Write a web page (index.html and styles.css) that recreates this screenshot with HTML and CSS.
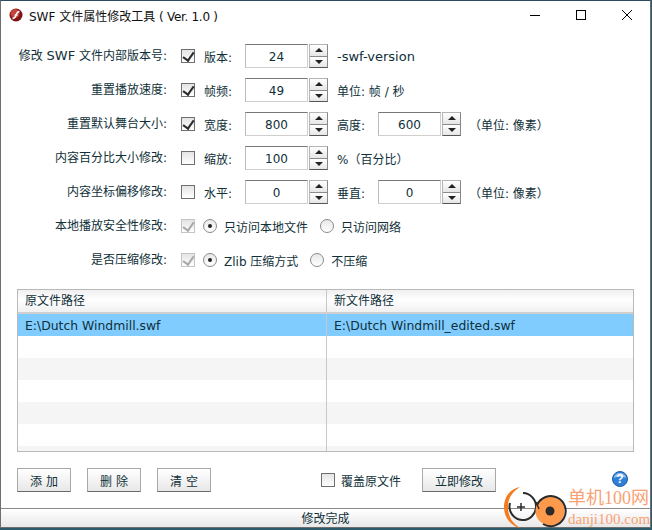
FILE: index.html
```html
<!DOCTYPE html>
<html lang="zh-CN">
<head>
  <meta charset="UTF-8" />
  <title>SWF 文件属性修改工具</title>
  <link rel="stylesheet" href="styles.css">
</head>
<body>
  <div class="window">
    <div class="titlebar">
      <svg class="app-icon" width="14" height="14" viewBox="0 0 14 14">
        <circle cx="7" cy="7" r="6.500" fill="#7d1414"/>
        <circle cx="6" cy="5.500" r="4.500" fill="#c2423c"/>
        <path d="M3.500 10.500c2.500 0 3-1.500 3.600-3.500s1.200-3.600 3.400-3.600" fill="none" stroke="#fff" stroke-width="1.500"/>
        <path d="M5.500 7h3" stroke="#fff" stroke-width="1.200"/>
      </svg>
      <span class="title">SWF 文件属性修改工具 <span class="title-ver">( Ver. 1.0 )</span></span>
      <div class="win-buttons">
        <svg class="win-btn" width="46" height="28" viewBox="0 0 46 28"><path d="M18 14.500h10" stroke="#000" fill="none"/></svg>
        <svg class="win-btn" width="46" height="28" viewBox="0 0 46 28"><rect x="18.500" y="9.500" width="9" height="9" stroke="#000" fill="none"/></svg>
        <svg class="win-btn" width="46" height="28" viewBox="0 0 46 28"><path d="M18 9l10 10M28 9l-10 10" stroke="#000" fill="none"/></svg>
      </div>
    </div>

    <div class="form">
      <div class="row">
        <span class="row-label">修改 <span class="latin">SWF</span> 文件内部版本号:</span>
        <span class="check checked"></span>
        <span class="field-label">版本:</span>
        <span class="spin"><span class="spin-value">24</span><span class="spin-btns"><i class="up"></i><i class="down"></i></span></span>
        <span class="note first latin">-swf-version</span>
      </div>
      <div class="row">
        <span class="row-label">重置播放速度:</span>
        <span class="check checked"></span>
        <span class="field-label">帧频:</span>
        <span class="spin"><span class="spin-value">49</span><span class="spin-btns"><i class="up"></i><i class="down"></i></span></span>
        <span class="note first">单位: 帧 / 秒</span>
      </div>
      <div class="row">
        <span class="row-label">重置默认舞台大小:</span>
        <span class="check checked"></span>
        <span class="field-label">宽度:</span>
        <span class="spin"><span class="spin-value">800</span><span class="spin-btns"><i class="up"></i><i class="down"></i></span></span>
        <span class="field-label second">高度:</span>
        <span class="spin"><span class="spin-value">600</span><span class="spin-btns"><i class="up"></i><i class="down"></i></span></span>
        <span class="note last">（单位: 像素）</span>
      </div>
      <div class="row">
        <span class="row-label">内容百分比大小修改:</span>
        <span class="check"></span>
        <span class="field-label">缩放:</span>
        <span class="spin"><span class="spin-value">100</span><span class="spin-btns"><i class="up"></i><i class="down"></i></span></span>
        <span class="note first">%（百分比）</span>
      </div>
      <div class="row">
        <span class="row-label">内容坐标偏移修改:</span>
        <span class="check"></span>
        <span class="field-label">水平:</span>
        <span class="spin"><span class="spin-value">0</span><span class="spin-btns"><i class="up"></i><i class="down"></i></span></span>
        <span class="field-label second">垂直:</span>
        <span class="spin"><span class="spin-value">0</span><span class="spin-btns"><i class="up"></i><i class="down"></i></span></span>
        <span class="note last">（单位: 像素）</span>
      </div>
      <div class="row">
        <span class="row-label">本地播放安全性修改:</span>
        <span class="check checked disabled"></span>
        <span class="radio on"></span>
        <span class="radio-label">只访问本地文件</span>
        <span class="radio"></span>
        <span class="radio-label">只访问网络</span>
      </div>
      <div class="row">
        <span class="row-label">是否压缩修改:</span>
        <span class="check checked disabled"></span>
        <span class="radio on"></span>
        <span class="radio-label">Zlib 压缩方式</span>
        <span class="radio"></span>
        <span class="radio-label">不压缩</span>
      </div>
    </div>

    <div class="table">
      <div class="thead">
        <div class="col-a">原文件路径</div>
        <div class="col-b">新文件路径</div>
      </div>
      <div class="tr selected">
        <div class="col-a">E:\Dutch Windmill.swf</div>
        <div class="col-b">E:\Dutch Windmill_edited.swf</div>
      </div>
      <div class="tr"><div class="col-a"></div><div class="col-b"></div></div>
      <div class="tr alt"><div class="col-a"></div><div class="col-b"></div></div>
      <div class="tr"><div class="col-a"></div><div class="col-b"></div></div>
      <div class="tr alt"><div class="col-a"></div><div class="col-b"></div></div>
      <div class="tr"><div class="col-a"></div><div class="col-b"></div></div>
      <div class="tr alt short"><div class="col-a"></div><div class="col-b"></div></div>
    </div>

    <div class="actions">
      <button class="btn">添 加</button>
      <button class="btn">删 除</button>
      <button class="btn">清 空</button>
      <span class="check overwrite"></span>
      <span class="overwrite-label">覆盖原文件</span>
      <button class="btn btn-wide">立即修改</button>
      <svg class="help" width="16" height="16" viewBox="0 0 16 16">
        <circle cx="8" cy="8" r="7.500" fill="#2f7fd6" stroke="#1f5fa8"/>
        <path d="M2 7a6 5 0 0 1 12 0a8 4 0 0 0-12 0z" fill="#8fc1f2"/>
        <text x="8" y="12" text-anchor="middle" class="help-mark">?</text>
      </svg>
    </div>

    <div class="statusbar">修改完成</div>
  </div>

  <div class="watermark">
    <svg class="wm-logo" width="66" height="44" viewBox="0 0 66 44">
      <path d="M16 1C5 3 0 12 0 21s5 18 16 21c-8-5-12-12-12-21S8 6 16 1z" fill="#f47b20"/>
      <path d="M19 7a13.500 13.500 0 1 1-1 27a13.500 13.500 0 0 1-12-17" fill="none" stroke="#2b2b2b" stroke-width="2"/>
      <path d="M13 21h8M17 17v8" stroke="#2b2b2b" stroke-width="1.500"/>
      <circle cx="46" cy="25" r="14.500" fill="#ff9a4d"/>
      <path d="M33 19a15 15 0 1 1 6 19" fill="none" stroke="#2b2b2b" stroke-width="2"/>
      <path d="M32 16l3 7" stroke="#2b2b2b" stroke-width="1.500"/>
      <circle cx="46" cy="25" r="4.500" fill="#2b2b2b"/>
    </svg>
    <div class="wm-text">
      <span class="wm-name">单机100网</span>
      <span class="wm-url">danji100.com</span>
    </div>
  </div>
</body>
</html>
```

FILE: styles.css
```css
* {
  margin: 0;
  padding: 0;
  box-sizing: border-box;
}
html, body {
  height: 100%;
  overflow: hidden;
  background: #2d5a6a;
}
body {
  position: relative;
  font-family: "DejaVu Sans", "Noto Sans CJK SC", sans-serif;
  font-size: 12px;
  color: #0f3038;
}
.latin {
  font-size: 13px;
}
.window {
  width: 651px;
  height: 528px;
  background: #fff;
  border: 1px solid #6e6e6e;
  border-top-color: #2c4a62;
  display: flex;
  flex-direction: column;
}
.titlebar {
  height: 28px;
  display: flex;
  align-items: center;
  padding-left: 8px;
  flex: none;
}
.app-icon {
  margin-right: 6px;
}
.title {
  color: #111;
}
.title-ver {
  letter-spacing: -0.3px;
}
.win-buttons {
  margin-left: auto;
  display: flex;
}

.form {
  padding: 10px 0 0 0;
  flex: none;
}
.row {
  height: 34px;
  display: flex;
  align-items: center;
}
.row-label {
  width: 166px;
  text-align: right;
  margin-bottom: 3px;
}
.check {
  width: 14px;
  height: 14px;
  margin-left: 14px;
  border: 1px solid #6f6f6f;
  background: linear-gradient(#e4e4e4, #fff);
  position: relative;
  flex: none;
}
.check.checked::after {
  content: "";
  position: absolute;
  left: 3px;
  top: 0;
  width: 5px;
  height: 9px;
  border: solid #2a2a2a;
  border-width: 0 2px 2px 0;
  transform: rotate(35deg);
}
.check.disabled {
  border-color: #c4c4c4;
}
.check.disabled::after {
  border-color: #a8a8a8;
}
.field-label {
  margin-left: 9px;
  width: 41px;
}
.spin {
  display: flex;
  height: 24px;
  flex: none;
}
.spin-value {
  width: 63px;
  border: 1px solid #cfcfcf;
  border-top-color: #777;
  border-left-color: #bbb;
  display: flex;
  align-items: center;
  justify-content: center;
  margin-right: 1px;
  padding-top: 1px;
}
.spin-btns {
  width: 19px;
  display: flex;
  flex-direction: column;
  border: 1px solid #b4b4b4;
  border-bottom-color: #555;
  border-right-color: #888;
}
.spin-btns i {
  flex: 1;
  display: flex;
  align-items: center;
  justify-content: center;
  background: linear-gradient(#fff, #e6e6e6);
}
.spin-btns i.up {
  border-bottom: 1px solid #8a8a8a;
}
.spin-btns i::after {
  content: "";
  border-left: 4px solid transparent;
  border-right: 4px solid transparent;
}
.spin-btns i.up::after {
  border-bottom: 4px solid #222;
}
.spin-btns i.down::after {
  border-top: 4px solid #222;
}
.note.first {
  margin-left: 9px;
}
.note.last {
  margin-left: 8px;
}
.radio {
  width: 14px;
  height: 14px;
  border-radius: 50%;
  border: 1px solid #8a8a8a;
  background: linear-gradient(#e8e8e8, #fff);
  margin-left: 8px;
  position: relative;
  flex: none;
}
.radio.on::after {
  content: "";
  position: absolute;
  left: 4px;
  top: 4px;
  width: 4px;
  height: 4px;
  border-radius: 50%;
  background: #222;
}
.radio-label {
  margin-left: 7px;
  margin-right: 4px;
  padding-top: 1px;
}

.table {
  margin: 12px 16px 0 16px;
  height: 163px;
  border: 1px solid #b9b9b9;
  flex: none;
  overflow: hidden;
}
.thead, .tr {
  display: flex;
}
.thead {
  height: 24px;
  background: linear-gradient(#f0f0f0, #fff 45%, #f0f0f0);
  border-bottom: 2px solid #cfcfcf;
  line-height: 23px;
}
.tr {
  height: 22px;
  line-height: 23px;
  font-size: 12.4px;
}
.tr.alt {
  background: #f5f5f5;
}
.tr.short {
  height: 7px;
}
.tr.selected {
  background: #80ccff;
}
.col-a, .col-b {
  padding-left: 7px;
}
.col-a {
  width: 309px;
  border-right: 1px solid #c8c8c8;
}
.col-b {
  flex: 1;
}

.actions {
  margin: 16px 16px 0 16px;
  height: 24px;
  display: flex;
  align-items: center;
  flex: none;
}
.btn {
  width: 54px;
  height: 24px;
  margin-right: 16px;
  border: 1px solid #a8a8a8;
  border-bottom-color: #6a6a6a;
  background: linear-gradient(#fff, #e8e8e8);
  font: inherit;
  color: inherit;
}
.btn-wide {
  width: 74px;
  margin-left: 21px;
  margin-right: 0;
}
.check.overwrite {
  margin-left: 94px;
}
.overwrite-label {
  margin-left: 6px;
}
.help {
  margin-left: auto;
  margin-right: 6px;
  position: relative;
  top: -1px;
}
.help-mark {
  font-family: "Liberation Sans", sans-serif;
  font-size: 12px;
  font-weight: bold;
  fill: #fff;
}

.statusbar {
  margin-top: auto;
  height: 19px;
  border-top: 1px solid #8a8a8a;
  background: linear-gradient(#fff, #e8e8e8);
  text-align: center;
  line-height: 21px;
  flex: none;
}

.watermark {
  position: absolute;
  left: 504px;
  top: 486px;
  display: flex;
}
.wm-text {
  display: flex;
  flex-direction: column;
  color: #f8a274;
  font-family: "Liberation Serif", "Noto Sans CJK SC", serif;
  margin-left: -2px;
  white-space: nowrap;
}
.wm-name {
  font-size: 18px;
  line-height: 24px;
}
.wm-url {
  font-size: 15px;
  line-height: 18px;
}
```
